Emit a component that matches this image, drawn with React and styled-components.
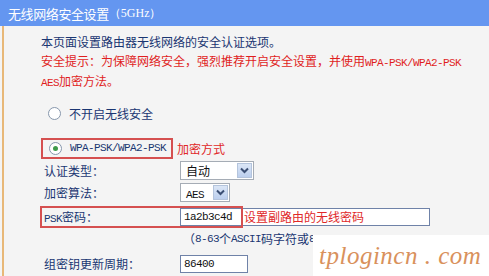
import React from 'react';
import styled, { createGlobalStyle } from 'styled-components';

const GlobalStyle = createGlobalStyle`
  html, body {
    margin: 0;
    padding: 0;
    background: #ffffff;
  }
  body {
    font-family: "Noto Sans CJK SC", "Liberation Sans", sans-serif;
    font-size: 12px;
  }
`;

const cjk = `"Noto Sans CJK SC", "Liberation Sans", sans-serif`;
const mono = `"Liberation Mono", "Noto Sans CJK SC", monospace`;

const Page = styled.div`
  position: relative;
  width: 489px;
  height: 276px;
  overflow: hidden;
  background: #f4f4f4;
`;

const TitleBar = styled.div`
  height: 26px;
  display: flex;
  align-items: center;
  padding-left: 8px;
  background: #6496f0;
  color: #ffffff;
  font-family: ${cjk};
  font-size: 13px;
  letter-spacing: -0.4px;
`;

const TitleTag = styled.span`
  font-family: "Liberation Serif", serif;
  font-size: 12px;
  letter-spacing: 0;
`;

const Body = styled.div`
  margin-left: 2px;
  border-left: 2px solid #e8b878;
  padding: 7px 0 0 37px;
  height: 250px;
  box-sizing: border-box;
  background: #f4f4f4;
`;

const Intro = styled.div`
  font-family: ${cjk};
  font-size: 12px;
  line-height: 18.5px;
  color: ${({ $red }) => ($red ? '#e01e1e' : '#1a3672')};
  white-space: nowrap;
`;

const Latin = styled.span`
  font-family: ${mono};
  font-size: 11px;
  letter-spacing: -0.6px;
`;

const RadioRow = styled.div`
  display: flex;
  align-items: center;
  height: 20px;
  margin-top: 11px;
  padding-left: 7px;
  gap: 8px;
  color: #1a3672;
`;

const Radio = styled.span`
  width: 11px;
  height: 11px;
  border-radius: 50%;
  border: 1px solid #8797ac;
  background: #ffffff;
  display: flex;
  align-items: center;
  justify-content: center;
  flex-shrink: 0;
  &::after {
    content: '';
    width: 5px;
    height: 5px;
    border-radius: 50%;
    background: ${({ $checked }) => ($checked ? '#3e9a4a' : 'transparent')};
  }
`;

const ModeRow = styled.div`
  display: flex;
  align-items: center;
  margin-top: 14px;
  gap: 4px;
`;

const RedFrame = styled.div`
  display: flex;
  align-items: center;
  gap: 8px;
  height: 17px;
  padding: 0 5px 0 6px;
  border: 2px solid #d55050;
  color: #1a3672;
`;

const Note = styled.span`
  color: #e02828;
  font-family: ${cjk};
  font-size: 12px;
`;

const FormRow = styled.div`
  position: relative;
  display: grid;
  grid-template-columns: 139px auto;
  align-items: center;
  height: ${({ $h }) => $h || 21}px;
  margin-top: ${({ $gap }) => $gap || 0}px;
  color: #1a3672;
`;

const Label = styled.span`
  padding-left: 3px;
  font-family: ${cjk};
  font-size: 12px;
`;

const Select = styled.div`
  display: flex;
  align-items: center;
  justify-content: space-between;
  width: ${({ $w }) => $w}px;
  height: 19px;
  box-sizing: border-box;
  padding: 1px;
  border: 1px solid #a5acb5;
  background: #ffffff;
  color: #111111;
`;

const SelectText = styled.span`
  padding-left: 4px;
  font-family: ${cjk};
  font-size: 12px;
`;

const SelectButton = styled.span`
  width: 15px;
  height: 15px;
  box-sizing: border-box;
  display: flex;
  align-items: center;
  justify-content: center;
  border: 1px solid #b4c4dc;
  background: linear-gradient(#dbe6f6, #bccfee);
`;

const Field = styled.div`
  display: flex;
  align-items: center;
  width: ${({ $w }) => $w}px;
  height: 18px;
  box-sizing: border-box;
  border: 1px solid #6f82a8;
  background: #ffffff;
  color: #111111;
`;

const FieldValue = styled.span`
  width: ${({ $w }) => $w || 'auto'}px;
  padding-left: 3px;
  font-family: ${mono};
  font-size: 11px;
  letter-spacing: -0.6px;
`;

const PskFrame = styled.div`
  position: absolute;
  left: -1px;
  top: 0;
  width: 203px;
  height: 22px;
  box-sizing: border-box;
  border: 2px solid #d55050;
  pointer-events: none;
`;

const Hint = styled.div`
  display: flex;
  align-items: center;
  height: 18px;
  margin-top: 2px;
  padding-left: 142px;
  color: #1a3672;
  font-family: ${cjk};
  font-size: 12px;
  white-space: nowrap;
`;

const Watermark = styled.div`
  position: absolute;
  left: 313px;
  top: 235px;
  right: 0;
  bottom: 0;
  display: flex;
  align-items: center;
  padding-left: 6px;
  background: #ffffff;
  color: #d9915c;
  font-family: "Liberation Serif", "DejaVu Serif", serif;
  font-style: italic;
  font-size: 25px;
  letter-spacing: 0.5px;
  white-space: nowrap;
`;

const Chevron = () => (
  <svg width="9" height="7" viewBox="0 0 9 7">
    <path d="M1 1.5 L4.5 5 L8 1.5" fill="none" stroke="#3b4f74" strokeWidth="2" />
  </svg>
);

export default function App() {
  return (
    <>
      <GlobalStyle />
      <Page>
        <TitleBar>
          无线网络安全设置<TitleTag>（5GHz）</TitleTag>
        </TitleBar>
        <Body>
          <Intro>本页面设置路由器无线网络的安全认证选项。</Intro>
          <Intro $red>
            安全提示：为保障网络安全，强烈推荐开启安全设置，并使用<Latin>WPA-PSK/WPA2-PSK</Latin>
          </Intro>
          <Intro $red>
            <Latin>AES</Latin>加密方法。
          </Intro>

          <RadioRow>
            <Radio />
            <span>不开启无线安全</span>
          </RadioRow>

          <ModeRow>
            <RedFrame>
              <Radio $checked />
              <Latin>WPA-PSK/WPA2-PSK</Latin>
            </RedFrame>
            <Note>加密方式</Note>
          </ModeRow>

          <FormRow $gap={1}>
            <Label>认证类型：</Label>
            <Select $w={74}>
              <SelectText>自动</SelectText>
              <SelectButton>
                <Chevron />
              </SelectButton>
            </Select>
          </FormRow>

          <FormRow $gap={1}>
            <Label>加密算法：</Label>
            <Select $w={50}>
              <SelectText>
                <Latin>AES</Latin>
              </SelectText>
              <SelectButton>
                <Chevron />
              </SelectButton>
            </Select>
          </FormRow>

          <FormRow $h={22} $gap={3}>
            <Label>
              <Latin>PSK</Latin>密码：
            </Label>
            <Field $w={250}>
              <FieldValue $w={60}>1a2b3c4d</FieldValue>
              <Note>设置副路由的无线密码</Note>
            </Field>
            <PskFrame />
          </FormRow>

          <Hint>
            （<Latin>8-63</Latin>个<Latin>ASCII</Latin>码字符或<Latin>8</Latin>
          </Hint>

          <FormRow $h={20} $gap={6}>
            <Label>组密钥更新周期：</Label>
            <Field $w={68}>
              <FieldValue>86400</FieldValue>
            </Field>
          </FormRow>
        </Body>
        <Watermark>tplogincn . com</Watermark>
      </Page>
    </>
  );
}
